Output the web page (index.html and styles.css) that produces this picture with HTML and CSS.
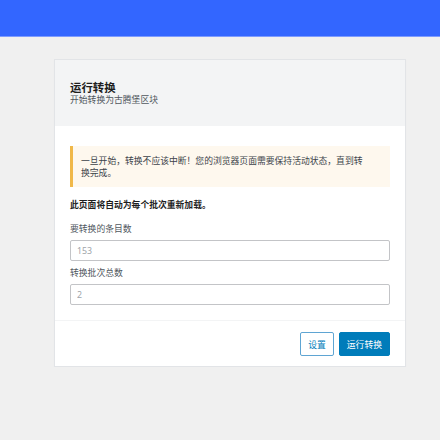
FILE: index.html
```html
<!DOCTYPE html>
<html lang="zh-CN">
<head>
<meta charset="utf-8">
<link rel="stylesheet" href="styles.css">
</head>
<body>
<div class="topbar"></div>
<div class="page">
  <div class="card">
    <div class="card-header">
      <div class="title">运行转换</div>
      <div class="subtitle">开始转换为古腾堡区块</div>
    </div>
    <div class="card-body">
      <div class="notice">一旦开始，转换不应该中断！您的浏览器页面需要保持活动状态，直到转换完成。</div>
      <p class="strong">此页面将自动为每个批次重新加载。</p>
      <label class="label">要转换的条目数</label>
      <input class="input" type="text" placeholder="153">
      <label class="label second">转换批次总数</label>
      <input class="input" type="text" placeholder="2">
    </div>
    <div class="card-footer">
      <button class="btn btn-secondary">设置</button>
      <button class="btn btn-primary">运行转换</button>
    </div>
  </div>
</div>
</body>
</html>
```
FILE: styles.css
```css
* { box-sizing: border-box; }
body {
  margin: 0;
  background: #f0f0f0;
  font-family: "Noto Sans", "Noto Sans CJK SC", sans-serif;
  color: #1e1e1e;
  font-size: 8.8px;
}
.topbar {
  height: 37px;
  background: #3366ff;
  border-bottom: 1px solid #7d9bff;
}
.page {
  padding: 22px 34px 0 54px;
}
.card {
  width: 352px;
  background: #fff;
  border: 1px solid #e2e4e7;
  box-shadow: 0 1px 1px rgba(0,0,0,0.04);
}
.card-header {
  background: #f3f4f5;
  padding: 21px 15px 20px;
}
.title {
  font-size: 11.4px;
  font-weight: 700;
  line-height: 13px;
  color: #1e1e1e;
}
.subtitle {
  font-size: 8.8px;
  line-height: 12px;
  color: #50575e;
}
.card-body {
  padding: 20px 15px 15px;
  display: flex;
  flex-direction: column;
}
.notice {
  background: #fef8ee;
  border-left: 3px solid #f0b849;
  padding: 9px 24px 8px 8px;
  line-height: 12px;
  color: #3c434a;
}
.strong {
  margin: 12px 0 0;
  font-weight: 700;
  line-height: 12px;
}
.label {
  display: block;
  margin-top: 12px;
  line-height: 12px;
  color: #50575e;
}
.label.second { margin-top: 6px; }
.input {
  margin-top: 5px;
  height: 21px;
  width: 100%;
  border: 1px solid #c3c4c7;
  border-radius: 2px;
  padding: 0 6px;
  font-family: inherit;
  font-size: 8.8px;
  color: #333;
  background: #fff;
}
.input::placeholder { color: #a0a5aa; }
.card-footer {
  border-top: 1px solid #f3f4f5;
  padding: 11px 15px 10px;
  display: flex;
  justify-content: flex-end;
  gap: 5px;
}
.btn {
  height: 24px;
  padding: 0 7px;
  font-family: inherit;
  font-size: 8.8px;
  border-radius: 2px;
  cursor: pointer;
}
.btn-secondary {
  background: #fff;
  color: #007cba;
  border: 1px solid #5fa5d3;
}
.btn-primary {
  background: #007cba;
  color: #fff;
  border: 1px solid #007cba;
}
```
